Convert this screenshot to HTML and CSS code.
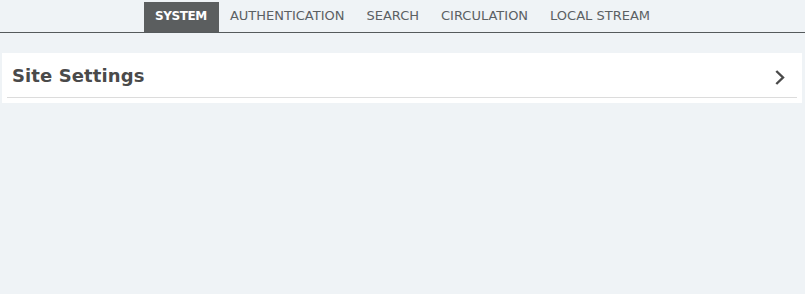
FILE: index.html
```html
<!DOCTYPE html>
<html>
<head>
<meta charset="utf-8">
<link rel="stylesheet" href="styles.css">
</head>
<body>
<nav class="tabs">
  <a class="tab active">SYSTEM</a>
  <a class="tab">AUTHENTICATION</a>
  <a class="tab">SEARCH</a>
  <a class="tab">CIRCULATION</a>
  <a class="tab">LOCAL STREAM</a>
</nav>
<main class="content">
  <section class="card">
    <div class="card-header">
      <h2 class="card-title">Site Settings</h2>
      <svg class="chevron" width="10" height="15" viewBox="0 0 10 15"><path d="M1.3 1 L8 7.5 L1.3 14" fill="none" stroke="#4a4a4a" stroke-width="2.4"/></svg>
    </div>
  </section>
</main>
</body>
</html>
```
FILE: styles.css
```css
html, body {
  margin: 0;
  padding: 0;
  background: #eff3f6;
  height: 100%;
}
body {
  font-family: "DejaVu Sans", sans-serif;
}
.tabs {
  display: flex;
  justify-content: center;
  padding-top: 2px;
  border-bottom: 1px solid #555a5c;
}
.tab {
  display: block;
  height: 30px;
  line-height: 28px;
  padding: 0 11px;
  font-size: 13px;
  color: #5b6063;
}
.tab.active {
  background: #5b5e5f;
  color: #ffffff;
  font-weight: bold;
  font-size: 12px;
  letter-spacing: -0.4px;
  padding: 0 12px 0 11px;
}
.content {
  padding: 20px 3px 0 2px;
}
.card {
  background: #ffffff;
  padding: 0 5px 5px;
}
.card-header {
  display: flex;
  align-items: center;
  justify-content: space-between;
  height: 44px;
  border-bottom: 1px solid #dcdcdc;
  padding: 0 12px 0 5px;
}
.card-title {
  margin: 0;
  font-size: 18px;
  font-weight: bold;
  color: #4a4a4a;
  letter-spacing: 0.1px;
}
.chevron {
  display: block;
  margin-top: 4px;
}
```
